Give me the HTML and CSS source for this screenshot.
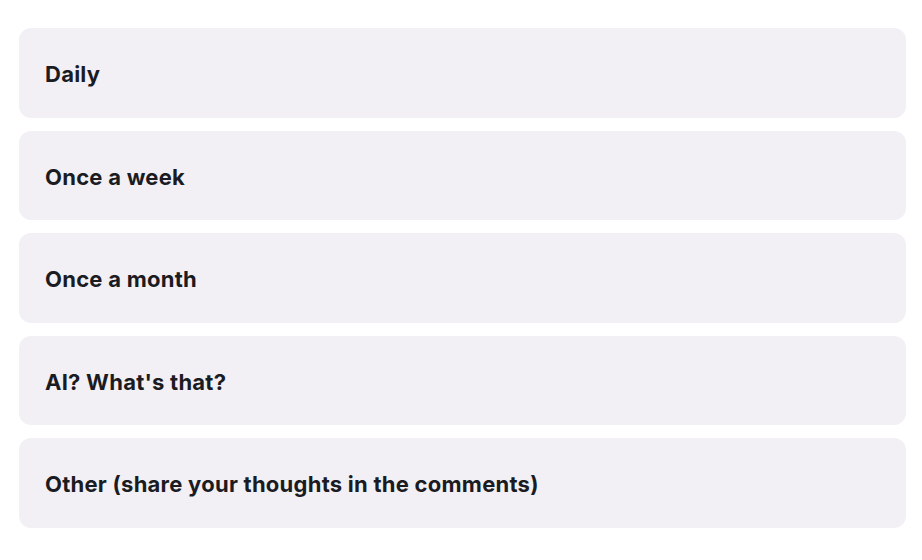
FILE: index.html
```html
<!DOCTYPE html>
<html lang="en">
<head>
    <meta charset="UTF-8">
    <meta name="viewport" content="width=device-width, initial-scale=1.0">
    <title>Poll</title>
    <link rel="stylesheet" href="styles.css">
</head>
<body>
    <div class="poll">
        <div class="option">Daily</div>
        <div class="option">Once a week</div>
        <div class="option">Once a month</div>
        <div class="option">AI? What's that?</div>
        <div class="option">Other (share your thoughts in the comments)</div>
    </div>
</body>
</html>
```

FILE: styles.css
```css
body {
    font-family: Inter, "Noto Sans", sans-serif;
    background-color: #ffffff;
    margin: 0;
    padding: 0;
}
.poll {
    display: flex;
    flex-direction: column;
    gap: 13px;
    padding: 28px 16px 0 19px;
}
.option {
    background-color: #f2f0f5;
    border-radius: 12px;
    height: 89.5px;
    box-sizing: border-box;
    display: flex;
    align-items: center;
    padding: 3px 26px 0;
    font-size: 22px;
    font-weight: 700;
    color: #1b1b22;
    letter-spacing: 0.25px;
}
```
